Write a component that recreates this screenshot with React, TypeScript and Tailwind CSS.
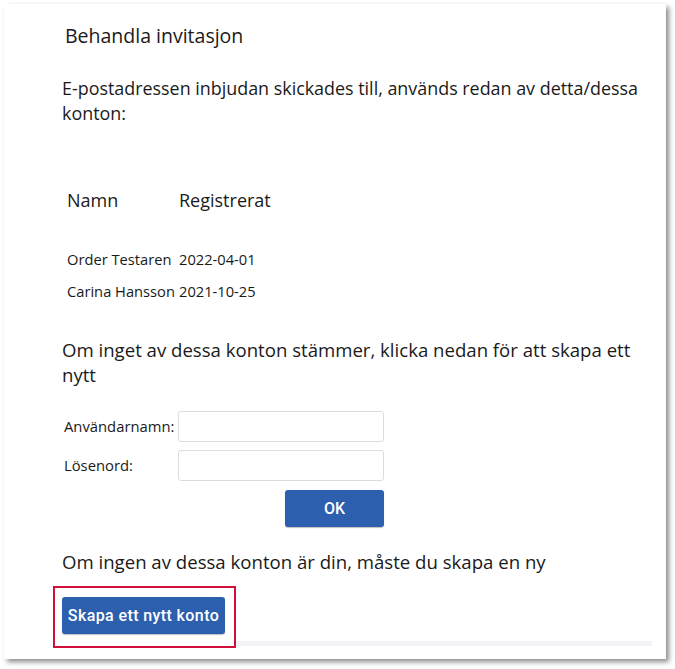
export default function App() {
    return (
        <div className="w-[675px] h-[669px] bg-white pt-[4px] pl-[4px]" style={{fontFamily: '"Open Sans", sans-serif'}}>
            <div className="w-[662px] h-[655px] bg-white shadow-[3px_3px_5px_rgba(0,0,0,0.45)] pt-[20px] pl-[58px] text-[#1a1a1a]">
                <h1 className="text-[19.5px] leading-[24px] ml-[3px]">Behandla invitasjon</h1>
                <p className="text-[17.9px] leading-[25px] mt-[28px] w-[600px]">
                    E-postadressen inbjudan skickades till, används redan av detta/dessa konton:
                </p>

                <div className="mt-[62px] ml-[5px]">
                    <div className="flex text-[18px] leading-[24px]">
                        <span className="w-[112px]">Namn</span>
                        <span>Registrerat</span>
                    </div>
                    <div className="mt-[35px] flex flex-col gap-[8px] text-[14.7px] leading-[24px]">
                        <div className="flex">
                            <span className="w-[112px]">Order Testaren</span>
                            <span>2022-04-01</span>
                        </div>
                        <div className="flex">
                            <span className="w-[112px]">Carina Hansson</span>
                            <span>2021-10-25</span>
                        </div>
                    </div>
                </div>

                <p className="text-[18.6px] leading-[25px] mt-[34px] w-[600px]">
                    Om inget av dessa konton stämmer, klicka nedan för att skapa ett nytt
                </p>

                <div className="mt-[24px] ml-[2px] flex flex-col gap-[8px] text-[14.8px]">
                    <div className="flex items-center">
                        <label className="w-[114px]">Användarnamn:</label>
                        <input className="w-[206px] h-[31px] border border-[#dcdcdc] rounded-[3px] bg-white"/>
                    </div>
                    <div className="flex items-center">
                        <label className="w-[114px]">Lösenord:</label>
                        <input type="password" className="w-[206px] h-[31px] border border-[#dcdcdc] rounded-[3px] bg-white"/>
                    </div>
                    <div className="flex">
                        <button className="ml-[221px] mt-[1px] w-[99px] h-[37px] bg-[#2c5fad] rounded-[3px] text-white text-[16px] font-medium shadow-[0_1px_1px_rgba(0,0,0,0.25)]" style={{fontFamily: 'Roboto, sans-serif'}}>OK</button>
                    </div>
                </div>

                <p className="text-[18.6px] leading-[25px] mt-[22px]">
                    Om ingen av dessa konton är din, måste du skapa en ny
                </p>

                <div className="mt-[12px] flex items-end">
                    <div className="border-2 border-[#d0103a] w-[183px] h-[62px] pl-[7px] pt-[9px] -ml-[9px] relative z-10">
                        <button className="w-[163px] h-[37px] bg-[#2c5fad] rounded-[3px] text-white text-[16px] font-medium tracking-[0.4px] shadow-[0_1px_1px_rgba(0,0,0,0.25)]" style={{fontFamily: 'Roboto, sans-serif'}}>Skapa ett nytt konto</button>
                    </div>
                    <div className="w-[416px] h-[5px] bg-[#f2f3f7] mb-[2px]"></div>
                </div>
            </div>
        </div>
    );
}
